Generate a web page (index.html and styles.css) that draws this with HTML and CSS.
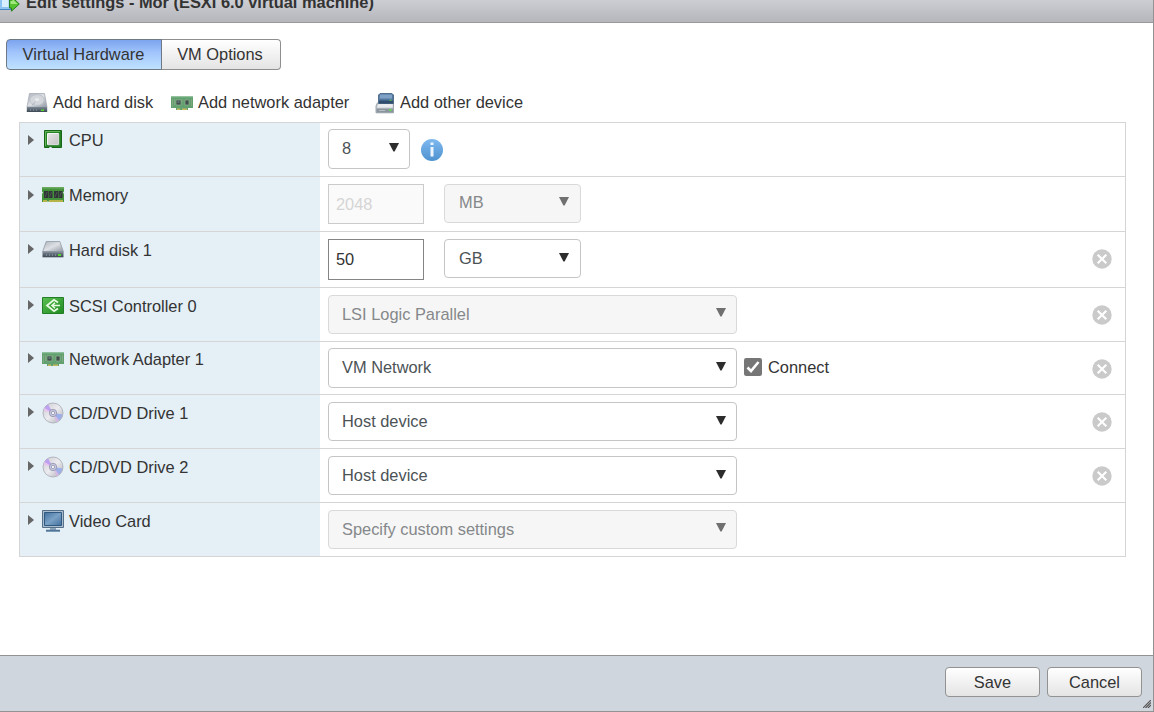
FILE: index.html
```html
<!DOCTYPE html>
<html lang="en">
<head>
  <meta charset="UTF-8" />
  <meta name="viewport" content="width=device-width, initial-scale=1.0"/>
  <title>Edit settings</title>
  <link rel="stylesheet" href="styles.css">
</head>
<body>

  <!-- shared icons -->
  <svg class="defs" width="0" height="0">
    <defs>
      <linearGradient id="steel" x1="0" y1="0" x2="1" y2="1">
        <stop offset="0" stop-color="#aeb4bd"/><stop offset=".5" stop-color="#dde0e4"/><stop offset="1" stop-color="#9299a4"/>
      </linearGradient>
      <linearGradient id="dark" x1="0" y1="0" x2="0" y2="1">
        <stop offset="0" stop-color="#7c8794"/><stop offset="1" stop-color="#3c4854"/>
      </linearGradient>
      <linearGradient id="green" x1="0" y1="0" x2="1" y2="1">
        <stop offset="0" stop-color="#5cc052"/><stop offset="1" stop-color="#1d8a20"/>
      </linearGradient>
      <linearGradient id="blue" x1="0" y1="0" x2="0" y2="1">
        <stop offset="0" stop-color="#80b9f0"/><stop offset="1" stop-color="#4d92cf"/>
      </linearGradient>
      <linearGradient id="screen" x1="0" y1="0" x2="1" y2="1">
        <stop offset="0" stop-color="#41709f"/><stop offset=".5" stop-color="#7ba2c6"/><stop offset="1" stop-color="#416f9f"/>
      </linearGradient>
      <linearGradient id="disc" x1="0" y1="0" x2="1" y2="1">
        <stop offset="0" stop-color="#c8c8d0"/><stop offset=".5" stop-color="#ececf0"/><stop offset="1" stop-color="#aaaab3"/>
      </linearGradient>
      <linearGradient id="chip" x1="0" y1="0" x2="1" y2="1">
        <stop offset="0" stop-color="#e6e6e6"/><stop offset="1" stop-color="#c4c4c4"/>
      </linearGradient>
    </defs>
    <symbol id="i-expand" viewBox="0 0 6 10"><path d="M0 0L6 5L0 10Z" fill="#666"/></symbol>
    <symbol id="i-down" viewBox="0 0 10 9"><path d="M0 0H10L5.6 8.5H4.4Z" fill="currentColor"/></symbol>
    <symbol id="i-add-disk" viewBox="0 0 22 20">
      <path d="M3.5 .5H18.5L21 14H1Z" fill="url(#steel)" stroke="#9da4ad" stroke-width=".7"/>
      <ellipse cx="11" cy="7" rx="7.2" ry="5.4" fill="#d3d7dc" stroke="#b4bac2" stroke-width=".7"/>
      <ellipse cx="11" cy="6.5" rx="2.3" ry="1.5" fill="#e8eaec"/>
      <path d="M6 12l3.5-3" stroke="#a5adb7" stroke-width=".8"/>
      <path d="M.8 14H21.2V19H.8Z" fill="url(#dark)"/>
      <path d="M4 17h1M7 17h1M10 17h1" stroke="#9aa5af"/><path d="M15 16.5h3v1.5h-3z" fill="#59d62e"/>
    </symbol>
    <symbol id="i-disk" viewBox="0 0 22 17">
      <path d="M4.2 .5H17.8L21.3 10.5H.7Z" fill="url(#steel)" stroke="#939ba5" stroke-width=".8"/>
      <path d="M.5 10.5H21.5V16.3H.5Z" fill="url(#dark)"/>
      <path d="M.5 11H21.5" stroke="#8c96a1"/>
      <path d="M4 14h1M7 14h1M10 14h1M13 14h1" stroke="#aab3bb"/><path d="M16 13h3v2h-3z" fill="#59d62e"/>
    </symbol>
    <symbol id="i-net" viewBox="0 0 22 14">
      <path d="M0 .5H22V12H17V14H5V12H0Z" fill="#62a070"/>
      <path d="M0 1H22" stroke="#7ab585"/>
      <path d="M1.5 3v8M3.5 3v6M11 3v3M20.5 3v7" stroke="#80a77f"/>
      <path d="M5 4h5v5H5zM14 4h4v5h-4z" fill="#414f49" stroke="#94b395" stroke-width=".7"/>
      <path d="M6.5 5.5h2v1h-2z" fill="#789caf"/>
      <path d="M6 13.2H9M11 13.2H16" stroke="#c5b95d" stroke-width="1.5"/>
    </symbol>
    <symbol id="i-device" viewBox="0 0 20 21">
      <path d="M2.5 9.5L1 13V19.8H18.5V10" fill="#c9ced4" stroke="#8d959d" stroke-width=".8"/>
      <path d="M5 .5H17L18.5 2V10.5H3.5V2Z" fill="#54779f" stroke="#3f5c7b" stroke-width=".8"/>
      <path d="M5 1.5H17V5.5H4.5Z" fill="#7fa1c6"/>
      <path d="M4 7.5H18V10.5H4Z" fill="#304d6d"/><path d="M14.5 7.2h2" stroke="#5bd83e"/>
      <path d="M3.5 11H17.5V14.5H2Z" fill="#e9ebee"/>
      <path d="M1.5 15.5H18V19.5H1.5Z" fill="#8b959e"/><path d="M4 17.5h6" stroke="#b7bec4"/><path d="M14 17h2.5" stroke="#5bf03e" stroke-width="1.5"/>
    </symbol>
    <symbol id="i-cpu" viewBox="0 0 18 18">
      <path d="M.5 .5H17.5V17.5H8L6.5 16L5 17.5H.5Z" fill="#258325" stroke="#176617"/>
      <path d="M1.5 16V1.5H16" stroke="#66b45c" fill="none"/>
      <path d="M3.5 3.5H14.5V14.5H3.5Z" fill="url(#chip)" stroke="#f4f4f4"/>
      <path d="M4 15H15V4" stroke="#8ba18a" stroke-width=".6" fill="none"/>
    </symbol>
    <symbol id="i-memory" viewBox="0 0 22 16">
      <path d="M0 0H22V4.5L21 5.5L22 7V15H7L6 14L5 15H0V7L1 5.5L0 4.5Z" fill="#44923c"/>
      <path d="M0 .8H22" stroke="#71ae62" stroke-width="1.4"/>
      <path d="M2 4h4v7h-4zM6.5 4h4v7h-4zM12 4h4v7h-4zM16.5 4h4v7h-4z" fill="#303537"/>
      <path d="M3 10l2-5M7.5 10l2-5M13 10l2-5M17.5 10l2-5" stroke="#5a6060" stroke-width=".7"/>
      <path d="M1 14H5M7 14H21" stroke="#dcc04c" stroke-width="1.3"/>
    </symbol>
    <symbol id="i-scsi" viewBox="0 0 22 17">
      <path d="M.5 .5H21.5V16.5H.5Z" fill="url(#green)" stroke="#247e27"/>
      <path d="M16 5.5L12 2.8L5 8.5L12 14.2L16 11.5" fill="none" stroke="#e8fae3" stroke-width="1.8"/>
      <path d="M10 8.5H18M13 5.8L10 8.5L13 11.2" fill="none" stroke="#e8fae3" stroke-width="1.5"/>
    </symbol>
    <symbol id="i-disc" viewBox="0 0 22 22">
      <circle cx="11" cy="11" r="10" fill="url(#disc)" stroke="#a8a9b3" stroke-width=".8"/>
      <path d="M11 11L2 7A10 10 0 0 1 6 2.5Z" fill="#bda0f0"/>
      <path d="M11 11L1.8 9L2.5 6Z" fill="#e7c5ec"/>
      <path d="M11 11L20.5 12.5A10 10 0 0 1 17 18.5Z" fill="#9dafe9"/>
      <path d="M11 11L17 18.5L14.5 20Z" fill="#d6b7e5"/>
      <circle cx="11" cy="11" r="3.7" fill="#c6c8e1" stroke="#9090aa" stroke-width=".8"/>
      <circle cx="11" cy="11" r="1.6" fill="#fff" stroke="#8585a0" stroke-width=".7"/>
    </symbol>
    <symbol id="i-video" viewBox="0 0 22 22">
      <path d="M.5 .5H21.5V17.5H.5Z" fill="#a9bccd" stroke="#54708b"/>
      <path d="M2.5 2.5H19.5V15.5H2.5Z" fill="url(#screen)" stroke="#31597f"/>
      <path d="M8 18H14V20H8Z" fill="#8fa6bc"/><path d="M4 19.7H18V21.7H4Z" fill="#507699"/>
    </symbol>
    <symbol id="i-remove" viewBox="0 0 20 20">
      <circle cx="10" cy="10" r="9.7" fill="#cacaca"/>
      <path d="M5.7 5.7L14.3 14.3M14.3 5.7L5.7 14.3" stroke="#fff" stroke-width="2.1"/>
    </symbol>
  </svg>

  <div class="dialog">
    <div class="titlebar">
      <svg class="title-icon" viewBox="0 0 20 20">
        <path d="M-2 0H11V17.5H-2Z" fill="#8fc4f2" stroke="#4687c2"/>
        <path d="M2 8H8.5V15H2Z" fill="#d8eefe"/>
        <path d="M9.5 8H11.5V4.5L19.3 12L11.5 19.2V16H9.5Z" fill="#55c230" stroke="#278021"/>
        <path d="M12.5 7L17.5 12H10.5V9H12.5Z" fill="#a1e67e"/>
      </svg>
      <span class="title">Edit settings - Mor (ESXI 6.0 virtual machine)</span>
    </div>

    <div class="content">
      <div class="tabs">
        <div class="tab active">Virtual Hardware</div>
        <div class="tab">VM Options</div>
      </div>

      <div class="toolbar">
        <div class="tool disk"><svg width="22" height="20"><use href="#i-add-disk"/></svg>Add hard disk</div>
        <div class="tool net"><svg width="22" height="14"><use href="#i-net"/></svg>Add network adapter</div>
        <div class="tool device"><svg width="20" height="21"><use href="#i-device"/></svg>Add other device</div>
      </div>

      <div class="hardware">
        <div class="row high cpu">
          <div class="name"><svg class="expand"><use href="#i-expand"/></svg><span class="icon"><svg width="18" height="18"><use href="#i-cpu"/></svg></span>CPU</div>
          <div class="fields">
            <div class="select tiny tall">8<svg class="down"><use href="#i-down"/></svg></div>
            <svg class="info" viewBox="0 0 22 22">
              <circle cx="11" cy="11" r="11" fill="url(#blue)"/>
              <path d="M9.5 3.5h3v2.5h-3zM9.5 8h3v9.5h-3z" fill="#eef6fd"/>
            </svg>
          </div>
        </div>
        <div class="row memory">
          <div class="name"><svg class="expand"><use href="#i-expand"/></svg><span class="icon"><svg width="22" height="16"><use href="#i-memory"/></svg></span>Memory</div>
          <div class="fields">
            <input class="size" type="text" value="2048" disabled>
            <div class="select unit disabled">MB<svg class="down"><use href="#i-down"/></svg></div>
          </div>
        </div>
        <div class="row harddisk">
          <div class="name"><svg class="expand"><use href="#i-expand"/></svg><span class="icon"><svg width="22" height="17"><use href="#i-disk"/></svg></span>Hard disk 1</div>
          <div class="fields">
            <input class="size" type="text" value="50">
            <div class="select unit">GB<svg class="down"><use href="#i-down"/></svg></div>
          </div>
          <svg class="remove"><use href="#i-remove"/></svg>
        </div>
        <div class="row">
          <div class="name"><svg class="expand"><use href="#i-expand"/></svg><span class="icon"><svg width="22" height="17"><use href="#i-scsi"/></svg></span>SCSI Controller 0</div>
          <div class="fields">
            <div class="select disabled">LSI Logic Parallel<svg class="down"><use href="#i-down"/></svg></div>
          </div>
          <svg class="remove"><use href="#i-remove"/></svg>
        </div>
        <div class="row high network">
          <div class="name"><svg class="expand"><use href="#i-expand"/></svg><span class="icon"><svg width="22" height="14"><use href="#i-net"/></svg></span>Network Adapter 1</div>
          <div class="fields">
            <div class="select tall">VM Network<svg class="down"><use href="#i-down"/></svg></div>
            <div class="connect">
              <svg width="18" height="18" viewBox="0 0 18 18"><rect width="18" height="18" rx="2.2" fill="#767676"/><path d="M3.5 9.5L7 13L14.5 4" fill="none" stroke="#fff" stroke-width="2.6"/></svg>
              Connect
            </div>
          </div>
          <svg class="remove"><use href="#i-remove"/></svg>
        </div>
        <div class="row">
          <div class="name"><svg class="expand"><use href="#i-expand"/></svg><span class="icon"><svg width="22" height="22"><use href="#i-disc"/></svg></span>CD/DVD Drive 1</div>
          <div class="fields">
            <div class="select">Host device<svg class="down"><use href="#i-down"/></svg></div>
          </div>
          <svg class="remove"><use href="#i-remove"/></svg>
        </div>
        <div class="row">
          <div class="name"><svg class="expand"><use href="#i-expand"/></svg><span class="icon"><svg width="22" height="22"><use href="#i-disc"/></svg></span>CD/DVD Drive 2</div>
          <div class="fields">
            <div class="select">Host device<svg class="down"><use href="#i-down"/></svg></div>
          </div>
          <svg class="remove"><use href="#i-remove"/></svg>
        </div>
        <div class="row">
          <div class="name"><svg class="expand"><use href="#i-expand"/></svg><span class="icon"><svg width="22" height="22"><use href="#i-video"/></svg></span>Video Card</div>
          <div class="fields">
            <div class="select disabled">Specify custom settings<svg class="down"><use href="#i-down"/></svg></div>
          </div>
        </div>
      </div>
    </div>

    <div class="footer">
      <button>Save</button>
      <button>Cancel</button>
      <svg class="grip" viewBox="0 0 8 8"><path d="M0 8L8 0M2.5 8L8 2.5M5 8L8 5" stroke="#555" stroke-width="1.2"/></svg>
    </div>
  </div>

</body>
</html>
```

FILE: styles.css
```css
* { box-sizing: border-box; }
body {
  margin: 0;
  font-family: "Liberation Sans", Arial, sans-serif;
  font-size: 16.4px;
  color: #333;
  background: #fff;
  overflow: hidden;
}

svg {
  display: block;
  flex: none;
}

.defs {
  position: absolute;
}

.dialog {
  display: flex;
  flex-direction: column;
  width: 1154px;
  height: 712px;
  border-right: 1px solid #929292;
  border-bottom: 1px solid #929292;
}

.titlebar {
  display: flex;
  align-items: flex-start;
  height: 23px;
  background: linear-gradient(#cdced3, #b5b6bb);
  border-bottom: 1px solid #999;
  overflow: hidden;
}

.title-icon {
  width: 20px;
  height: 20px;
  margin-top: -8px;
}

.title {
  margin: -8px 0 0 6px;
  font-weight: bold;
  line-height: 20px;
}

.content {
  flex: 1;
  padding: 16px 27px 0 19px;
}

/* tabs */
.tabs {
  display: flex;
  margin-left: -13px;
}

.tab {
  width: 120px;
  height: 31px;
  padding-right: 1px;
  line-height: 29px;
  text-align: center;
  border: 1px solid #8e8e8e;
  border-left: none;
  border-radius: 0 4px 4px 0;
  background: linear-gradient(#fff, #e4e4e4);
}

.tab.active {
  width: 156px;
  margin-right: -1px;
  position: relative;
  border: 1px solid #6f7985;
  border-radius: 4px 0 0 4px;
  background: linear-gradient(#7ca3ee, #a2c6fc 45%, #bfe2ff);
}

.toolbar {
  display: flex;
  height: 52px;
  padding: 13px 0 0 7px;
}

.tool {
  display: flex;
  align-items: center;
  gap: 5px;
  height: 39px;
}

.tool svg { margin-top: 1px; }
.tool.disk { width: 145px; }
.tool.net { width: 204px; }

/* hardware list */
.hardware {
  border: 1px solid #d5d5d5;
  border-bottom: none;
}

.row {
  display: flex;
  height: 54px;
  border-bottom: 1px solid #d5d5d5;
}

.row.memory { height: 55px; }
.row.harddisk { height: 56px; }
.row.network { height: 53px; }

.name {
  display: flex;
  align-items: center;
  width: 300px;
  height: 100%;
  padding: 0 0 17px 8px;
  background: #e4eff6;
}

.high .name { padding-bottom: 18px; }
.harddisk .name { padding-bottom: 19px; }

.expand {
  width: 6px;
  height: 10px;
  margin-top: -2px;
}

.icon {
  display: flex;
  justify-content: center;
  width: 22px;
  margin: -1px 5px 0 8px;
}

.cpu .icon { margin-top: -3px; }

.fields {
  display: flex;
  align-items: flex-start;
  flex: 1;
  padding: 7px 0 0 8px;
}

.high .fields { padding-top: 6px; }

.select {
  display: flex;
  justify-content: space-between;
  width: 409px;
  height: 39px;
  padding: 0 10px 0 13px;
  line-height: 37px;
  color: #4c5356;
  background: #fff;
  border: 1px solid #c5c5c5;
  border-radius: 4px;
}

.select.tall { height: 40px; }
.select.tiny { width: 82px; }
.select.unit {
  width: 137px;
  padding: 0 11px 0 14px;
  margin-left: 20px;
}

.select.disabled {
  color: #85888a;
  background: #f6f6f6;
  border-color: #d9d9d9;
}

.memory .select { line-height: 35px; }

.down {
  width: 10px;
  height: 9px;
  margin-top: 13px;
  color: #2d2d2d;
}

.disabled .down {
  margin-top: 12px;
  color: #707070;
}

.size {
  width: 96px;
  height: 41px;
  padding: 0 7px;
  font: inherit;
  color: #333;
  border: 1px solid #858585;
  border-radius: 0;
}

.size:disabled {
  height: 40px;
  color: #d5d5d5;
  background: #fafafa;
  border-color: #cbcbcb;
}

.info {
  width: 22px;
  height: 22px;
  margin: 10px 0 0 11px;
}

.connect {
  display: flex;
  align-items: center;
  gap: 6px;
  height: 38px;
  margin-left: 7px;
}

.remove {
  width: 20px;
  height: 20px;
  margin: 17px 13px 0 0;
}

/* footer */
.footer {
  position: relative;
  display: flex;
  justify-content: flex-end;
  gap: 7px;
  height: 56px;
  padding: 11px 11px 0 0;
  background: #d0d6de;
  border-top: 1px solid #929292;
}

button {
  width: 95px;
  height: 30px;
  padding: 0;
  font: inherit;
  color: #333;
  border: 1px solid #929292;
  border-radius: 4px;
  background: linear-gradient(#fff, #e4e4e4);
}

.grip {
  position: absolute;
  right: 2px;
  bottom: 3px;
  width: 8px;
  height: 8px;
}
```
